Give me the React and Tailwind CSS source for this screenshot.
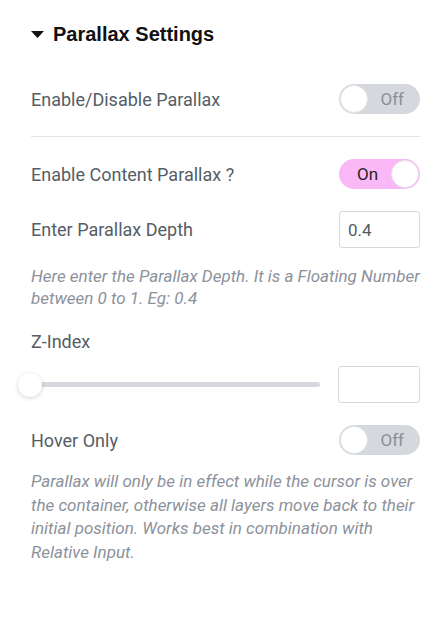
import React, { useState } from 'react';

function Toggle({ on, onChange }) {
  return (
    <button
      onClick={() => onChange(!on)}
      className={`relative w-[81px] h-[30px] rounded-full flex items-center shrink-0 ${
        on ? 'bg-[#fbb8f6]' : 'bg-[#d5d8dc]'
      }`}
    >
      <span
        className={`absolute top-px w-[28px] h-[28px] rounded-full bg-white border border-[#e3e5e8] ${
          on ? 'right-px' : 'left-px'
        }`}
      />
      <span
        className={`absolute text-[17px] leading-none ${
          on ? 'left-[18px] text-[#1f1f1f]' : 'right-[16px] text-[#8b9098]'
        }`}
      >
        {on ? 'On' : 'Off'}
      </span>
    </button>
  );
}

export default function App() {
  const [parallax, setParallax] = useState(false);
  const [content, setContent] = useState(true);
  const [hover, setHover] = useState(false);
  const [depth, setDepth] = useState('0.4');
  const [zIndex, setZIndex] = useState('');

  return (
    <div className="w-[447px] h-[623px] bg-white pl-[31px] pr-[27px] font-['Roboto',sans-serif] text-[#555d66]">
      {/* Section header */}
      <div className="pt-[24px] flex items-center h-[44px]">
        <svg width="13" height="7" viewBox="0 0 13 7" className="mr-[9px] mt-px">
          <path d="M0 0 H13 L6.5 7 Z" fill="#111" />
        </svg>
        <h2 className="font-['Liberation_Sans',Arial,sans-serif] font-bold text-[20px] leading-[20px] text-[#111]">
          Parallax Settings
        </h2>
      </div>

      <div className="mt-[40px] flex items-center justify-between">
        <span className="text-[18px]">Enable/Disable Parallax</span>
        <Toggle on={parallax} onChange={setParallax} />
      </div>

      <div className="mt-[22px] h-px bg-[#e3e5e8]" />

      <div className="mt-[22px] flex items-center justify-between">
        <span className="text-[18px]">Enable Content Parallax ?</span>
        <Toggle on={content} onChange={setContent} />
      </div>

      <div className="mt-[22px] flex items-center justify-between">
        <span className="text-[18px]">Enter Parallax Depth</span>
        <input
          value={depth}
          onChange={(e) => setDepth(e.target.value)}
          className="w-[81px] h-[37px] border border-[#d5d8dc] rounded-[3px] px-[8px] text-[17px] text-[#555d66] outline-none"
        />
      </div>

      <p className="mt-[17px] text-[17px] leading-[22px] italic text-[#8c929b]">
        Here enter the Parallax Depth. It is a Floating Number between 0 to 1. Eg: 0.4
      </p>

      <div className="mt-[23px] text-[18px] leading-[20px]">Z-Index</div>

      <div className="mt-[14px] flex items-center justify-between">
        <div className="relative w-[302px] h-[37px] flex items-center -ml-[13px]">
          <div className="w-full h-[5px] rounded-full bg-[#d5d8dc]" />
          <span className="absolute left-0 w-[24px] h-[24px] rounded-full bg-white shadow-[0_1px_4px_rgba(0,0,0,0.18)]" />
        </div>
        <input
          value={zIndex}
          onChange={(e) => setZIndex(e.target.value)}
          className="w-[82px] h-[37px] border border-[#d5d8dc] rounded-[3px] px-[8px] text-[17px] outline-none"
        />
      </div>

      <div className="mt-[22px] flex items-center justify-between">
        <span className="text-[18px]">Hover Only</span>
        <Toggle on={hover} onChange={setHover} />
      </div>

      <p className="mt-[15px] text-[17px] leading-[23.5px] italic text-[#8c929b]">
        Parallax will only be in effect while the cursor is over the container, otherwise all layers
        move back to their initial position. Works best in combination with Relative Input.
      </p>
    </div>
  );
}
